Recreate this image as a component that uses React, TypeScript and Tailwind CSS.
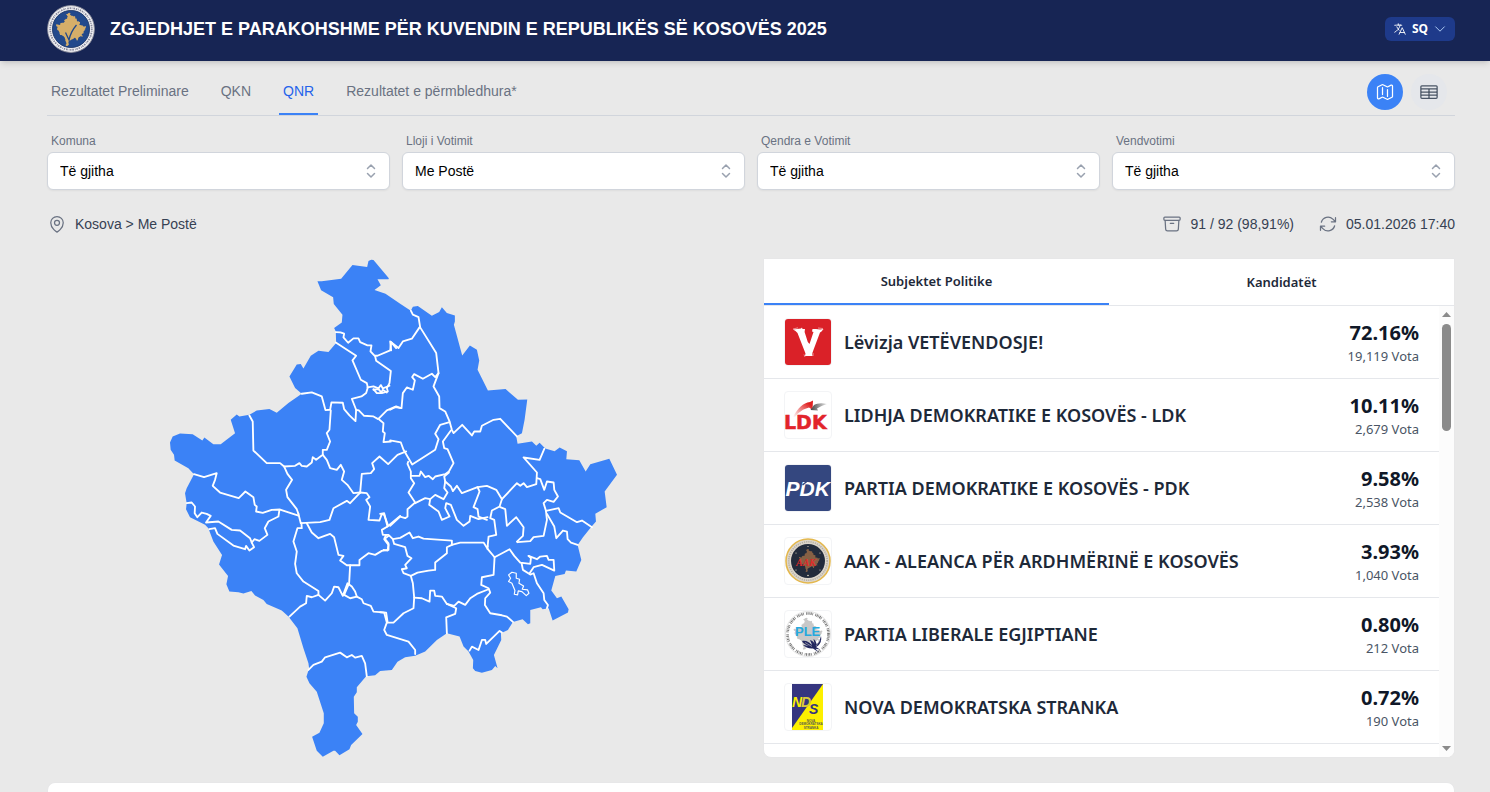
import React, { useState } from 'react';
import {
  HiOutlineArchiveBox,
  HiOutlineArrowPath,
  HiOutlineChevronDown,
  HiOutlineLanguage,
  HiOutlineMap,
  HiOutlineMapPin,
  HiOutlineTableCells,
} from 'react-icons/hi2';

const KOSOVO =
  'M472 95 L485 95 543 87 577 46 621 52 625 34 633 30 640 31 686 86 685 89 652 89 662 107 643 121 676 132 720 162 752 183 758 171 773 169 815 198 837 187 845 173 860 190 884 197 884 215 881 225 906 317 929 287 950 300 957 332 952 360 983 422 1036 418 1073 450 1101 449 1093 510 1085 550 1068 559 1072 582 1115 575 1128 588 1138 579 1155 596 1183 604 1198 593 1220 604 1218 628 1257 631 1276 665 1290 643 1347 627 1370 675 1333 725 1339 772 1305 792 1307 815 1292 832 1268 862 1252 885 1263 930 1248 965 1217 962 1213 972 1185 978 1173 1022 1190 1045 1203 1040 1225 1078 1223 1088 1177 1112 1165 1075 1147 1078 1142 1072 1110 1080 1110 1120 1103 1123 1087 1108 1058 1116 1043 1140 1022 1150 1023 1170 1001 1215 1012 1255 1005 1248 995 1260 965 1268 945 1263 938 1255 939 1230 925 1205 910 1190 898 1160 860 1150 830 1170 795 1205 765 1217 735 1222 712 1235 695 1260 660 1263 645 1276 618 1279 590 1312 590 1327 581 1340 582 1390 593 1400 593 1415 588 1425 607 1452 573 1485 568 1498 538 1516 525 1502 520 1502 488 1520 470 1502 456 1460 478 1448 491 1420 491 1390 470 1325 448 1300 439 1280 447 1255 445 1240 430 1195 412 1135 385 1100 365 1082 320 1062 310 1050 285 1037 274 1023 250 1031 235 1027 208 1025 199 1003 204 978 177 944 186 915 160 875 145 835 135 825 90 802 78 778 80 760 75 730 80 715 102 673 85 655 44 632 42 615 32 600 30 578 38 560 60 551 98 553 127 572 133 563 160 583 182 583 225 550 212 510 230 494 238 500 268 495 290 482 328 478 350 489 385 460 425 432 405 415 388 380 410 344 422 343 430 356 452 318 475 303 505 307 528 280 527 245 522 235 545 218 547 195 521 163 519 143 483 122Z';

// Municipality borders, one group of lines per region
const BORDERS = [
  {
    origin: 'translate(0 0)',
    lines: [
      'M527 247 L541 248 552 252 550 263 564 279 580 266 595 266 600 277 622 287 634 287 631 305 643 318 652 318 690 302 693 277 708 295',
      'M527 278 L588 318 577 332 602 390 620 400 623 413 618 430 604 440 575 447 588 480 586 514 568 497 552 478 548 459 514 458 510 480 496 481 485 440 455 428 425 432',
      'M645 320 L648 333 692 364 688 400 680 415 683 425 665 430 655 418 640 420',
      'M622 413 L640 410 655 416 662 406 668 416 688 408 M640 418 L650 430 662 430 668 420 680 428',
      'M588 480 L596 482 612 498 640 500 654 508 680 482 708 470 722 475',
      'M658 510 L670 520 668 545 674 550 670 577 692 575',
      'M512 482 L508 540 500 550 510 575 500 600 488 600 488 615 468 630 458 622 455 638 440 650 425 648 418 640 405 648 372 650 360 640 320 640 280 602 278 515 268 497',
      'M488 615 L500 630 510 655 530 660 542 645 552 665 545 690 562 705 580 730 600 728',
      'M600 728 L605 672 632 670 642 658 636 640 658 620 684 643 712 615 738 605',
      'M372 650 L382 672 396 690 378 720 382 742 410 778 415 792',
    ],
  },
  {
    origin: 'translate(0 570)',
    lines: [
      'M102 103 L132 112 170 100 165 120 158 138 180 158 236 175 256 155 280 172 284 195 290 200 288 215 308 219 335 210 360 209 415 227',
      'M358 210 L355 230 325 245 314 265 322 285 298 303 283 298 275 308',
      'M80 190 L95 188 105 200 104 220 112 232 125 218 140 222 152 228 138 248 175 245 215 270 240 272 270 295 275 308 282 322 268 332 258 318 255 328 220 317 172 282 165 265 148 268',
      'M415 222 L422 250 480 247 508 240 520 205 560 183 570 190 600 158',
      'M424 250 L425 265 412 265 400 305 410 335 405 372 410 400 430 425 475 453 475 465 455 472 440 468 438 490 420 500 388 530',
      'M440 250 L455 278 475 295 510 282 522 292 535 345 550 348 540 362 560 376 598 376 598 360 625 340 645 345 665 333 685 330 685 310 673 295 678 285',
      'M570 376 L567 430 552 465',
      'M475 465 L495 482 515 460 522 440 535 442 548 468 562 430 575 440 585 455 590 470 570 475 552 465',
      'M590 470 L605 478 610 490 632 498 640 515 678 518 682 545',
      'M600 158 L620 160 628 172 618 180 630 200 625 240 658 242 665 222 672 225 683 255',
    ],
  },
  {
    origin: 'translate(690 120)',
    lines: [
      'M62 63 L68 75 85 82 90 113 138 190 145 250 130 290 147 320 148 355 165 365 178 395 185 420 190 430 216 405 245 437 252 425 270 425 275 408 310 390 330 387 380 440',
      'M3 182 L0 155 25 175 38 155 65 147 88 113',
      'M145 250 L135 262 125 252 98 267 72 253 66 262 74 272 68 300 50 293 38 310 34 355 15 352 0 360',
      'M178 397 L150 405 135 432 145 448 135 480 66 524 40 480 32 458 0 452',
      'M182 422 L158 455 162 475 172 478 190 520 176 545 165 553 135 560 128 568 115 558 105 562 92 545 88 558 62 558',
      'M54 516 L52 522 62 545 62 565 72 580 55 608 75 638 52 658 52 680 45 685 30 680 0 708',
      'M75 640 L105 625 120 628 135 615 160 628 172 608 162 595 165 575 162 560 176 548',
      'M165 575 L182 590 188 604 200 588 215 610 262 592 290 588 318 600 335 628 380 580 390 588 400 580 410 592 438 583 440 548 400 503 448 510 462 477',
      'M262 592 L268 605 250 652 262 658 265 680 290 690',
      'M120 628 L117 645 145 665 155 690 178 680 165 655 168 640 182 645 200 690 220 708 238 695 240 678 265 688 292 682',
      'M335 628 L328 650 305 662 300 685 312 690 318 735 295 740 292 770',
      'M330 652 L345 658 350 708 378 682 400 712 398 738 380 755',
      'M440 565 L450 568 462 600 470 575 490 578 492 600 503 620 490 636 470 630 460 640 467 663 470 690 460 738 430 742 420 754 382 757',
      'M467 663 L505 655 510 668 560 697 575 692 605 712',
      'M470 672 L492 710 498 745 518 722 530 725 532 748 542 758 562 765',
    ],
  },
  {
    origin: 'translate(660 600)',
    lines: [
      'M60 198 L22 230 12 190 0 192',
      'M22 230 L5 240 8 255 25 255 38 268 60 264 88 248 98 265 115 260 130 266 215 272 215 283',
      'M25 258 L12 268 25 285 22 302 10 300',
      'M38 268 L42 282 75 292 82 318 94 325 75 345 80 355 65 358 70 370 92 378 112 368 145 362 165 360 165 338 200 310 200 292 215 285',
      'M215 285 L240 278 310 278 322 297 343 322 388 298 402 318 420 338 450 342 452 325 445 318',
      'M322 288 L322 297',
      'M343 322 L340 375 305 382 303 405 325 415 330 428 315 445 314 465 330 490 365 496 380 500 398 516',
      'M325 418 L290 432 270 445 255 465 235 455 222 468 200 462 185 440 165 438 162 422 150 422 148 455 125 445 102 443',
      'M92 378 L98 400 102 443 100 475 70 490 40 518 20 518',
      'M0 487 L12 488 20 518 12 540 20 555 85 575 105 600 105 612',
      'M200 462 L228 475 225 492 198 502 200 550',
      'M268 602 L275 590 295 600 305 570 315 570 318 582 358 543 365 548',
      'M424 340 L428 360 450 374 460 370 470 400 490 430 492 450 503 465 500 475',
      'M445 318 L470 328 480 320 500 318 505 330 520 330 522 362 485 345 460 352 448 370',
    ],
  },
  {
    origin: 'translate(360 930)',
    lines: ['M85 330 L100 315 125 305 135 292 180 278 200 292 215 285 225 293 245 288 255 310 260 349'],
  },
];

const sans = "font-['Liberation_Sans',Arial,sans-serif]";

const KosovoMap: React.FC = () => (
  <svg viewBox="27 25 1346 1498" className="w-full max-w-[449px]" role="img" aria-label="Kosova">
    <path d={KOSOVO} fill="#3b82f6" />
    <g fill="none" stroke="#fff" strokeWidth="5.5" strokeLinejoin="round" strokeLinecap="round">
      {BORDERS.map(({ origin, lines }) => (
        <g key={origin} transform={origin}>
          {lines.map(d => (
            <path key={d} d={d} />
          ))}
        </g>
      ))}
      <path
        strokeWidth="3.5"
        d="M1045 975 L1055 967 1068 970 1068 985 1078 988 1076 1000 1090 1008 1086 1018 1102 1020 1106 1030 1098 1037 1085 1025 1074 1023 1072 1035 1062 1033 1064 1022 1055 1000 1045 995 1051 985Z"
      />
    </g>
  </svg>
);

const Emblem: React.FC = () => (
  <svg viewBox="0 0 48 48" className="size-12" aria-hidden="true">
    <circle cx="24" cy="24" r="23.4" fill="#f1f1f4" stroke="#8d8f9c" strokeWidth="0.9" />
    <circle cx="24" cy="24" r="20.8" fill="none" stroke="#85879a" strokeWidth="1.8" strokeDasharray="1.3 0.8 0.7 1.1 1.6 0.9" />
    <circle cx="24" cy="24" r="18.6" fill="#22498c" stroke="#16305f" strokeWidth="0.8" />
    <path d={KOSOVO} fill="#d6ae69" transform="translate(8.4 7) scale(0.0224)" />
    <path d="M18.5 27.5 L22 35 C23 30 26 24 29.5 20" fill="none" stroke="#22498c" strokeWidth="1.3" />
  </svg>
);

const VVLogo: React.FC = () => (
  <svg viewBox="0 0 46 46" aria-hidden="true">
    <rect width="46" height="46" fill="#da2128" />
    <path
      d="M8 10.5 L12 10 16 9.4 17 8.5 17.5 10 20 10 19.6 13 22.8 23 24.5 25 28.5 13 27 12.5 27.5 10 31 10 35 10.4 38.5 10 36.5 12.5 35 13.5 29 29.5 27 35 27.5 37 20 37 20.5 34.5 12.5 14 10.5 12Z"
      fill="#fff"
    />
    <path d="M8 10 L13 8.8 M33 9 L38 9.5 M19 35.5 L20 38 M28 34 L28 37" stroke="#fff" strokeWidth="0.5" />
  </svg>
);

const LDKLogo: React.FC = () => (
  <svg viewBox="0 0 46 46" aria-hidden="true">
    <defs>
      <linearGradient id="ldk-red" x1="0" y1="1" x2="1" y2="0">
        <stop offset="0" stopColor="#fff" />
        <stop offset="0.8" stopColor="#e02020" />
      </linearGradient>
      <linearGradient id="ldk-gray" x1="0" y1="0" x2="1" y2="0">
        <stop offset="0" stopColor="#444" />
        <stop offset="1" stopColor="#e5e5e5" />
      </linearGradient>
    </defs>
    <path d="M8 25 C13 16 18 11 25 10 L28 8.500 27.500 18 24 15.500 C18 17 14 20 10 25Z" fill="url(#ldk-red)" />
    <path d="M42 12 C36 10.500 32 11.500 29 13 L25.500 18 33 18.500 32 16.500 C35 15 38 13 42 12Z" fill="url(#ldk-gray)" />
    <text x="-1" y="37" fontSize="19" fontWeight="700" fill="#e2242b" stroke="#e2242b" strokeWidth="0.5" fontFamily="'DejaVu Sans', sans-serif">
      LDK
    </text>
  </svg>
);

const PDKLogo: React.FC = () => (
  <svg viewBox="0 0 46 46" aria-hidden="true">
    <rect width="46" height="46" fill="#34477f" />
    <text x="0.5" y="31" fontSize="21" fontWeight="700" fontStyle="italic" fill="#fff" fontFamily="'Liberation Sans', sans-serif">
      PDK
    </text>
    <path d="M17.500 20 L23 15.500" stroke="#34477f" strokeWidth="1.600" />
  </svg>
);

const AAKLogo: React.FC = () => (
  <svg viewBox="0 0 46 46" aria-hidden="true">
    <circle cx="23" cy="23" r="22" fill="#ddd6cb" stroke="#e4b84e" strokeWidth="1.6" />
    <circle cx="23" cy="23" r="19.2" fill="none" stroke="#b5afa5" strokeWidth="1.6" strokeDasharray="1.2 1" />
    <circle cx="23" cy="23" r="17" fill="#232b3b" />
    <path d={KOSOVO} fill="#876044" transform="translate(13.500 10.400) scale(0.0155)" />
    <text x="11" y="28" fontSize="10" fontWeight="700" fontStyle="italic" fill="#e02a2a" fontFamily="'Liberation Serif', serif">
      AAK
    </text>
    <g fill="#e8e0c8">
      <circle cx="23" cy="8.5" r="0.6" />
      <circle cx="11" cy="15" r="0.6" />
      <circle cx="35" cy="15" r="0.6" />
      <circle cx="11" cy="32" r="0.6" />
      <circle cx="35" cy="32" r="0.6" />
      <circle cx="23" cy="37.5" r="0.8" />
    </g>
  </svg>
);

const PLELogo: React.FC = () => (
  <svg viewBox="0 0 46 46" aria-hidden="true">
    <circle cx="23" cy="23" r="22.500" fill="#fff" stroke="#c9c9c9" strokeWidth="0.500" />
    <circle
      cx="23"
      cy="23"
      r="20.500"
      fill="none"
      stroke="#777"
      strokeWidth="2.600"
      strokeDasharray="0.8 0.7 1.1 0.6 0.6 0.8 1.2 0.7 0.7 2.200"
    />
    <path d={KOSOVO} fill="#c8c8c8" transform="translate(8 6) scale(0.0215)" />
    <text x="10" y="24.500" fontSize="13" fontWeight="700" fill="#25a9de" fontFamily="'Liberation Sans', sans-serif">
      PLE
    </text>
    <path
      d="M17 30 C21 29 24 31 27 34 L25 29 C28 30 29 31 29.500 33 L28.500 28 C30.500 29 31 31 31.500 33 C34 32 35 28 36 25 C37 30 35 34 31 36 L35 38.500 30.500 37.800 34 41.500 28 37.500 C24 38 20 36 18 34 L24 34.800 C20 33.800 18 32 17 30Z"
      fill="#23285f"
    />
    <path d="M20 31.500 L27 35.500 M31 35 L35 29" stroke="#c8c8c8" strokeWidth="0.600" />
  </svg>
);

const NDSLogo: React.FC = () => (
  <svg viewBox="0 0 46 46" aria-hidden="true">
    <rect x="7" width="31" height="46" fill="#fdf000" />
    <path d="M7 0 H38 L7 44Z" fill="#35357f" />
    <g fontWeight="700" fontStyle="italic" fontFamily="'Liberation Sans Narrow', 'Liberation Sans', sans-serif">
      <text x="7" y="22.5" fontSize="14" fill="#fdf000">N</text>
      <text x="16" y="23" fontSize="14" fill="#d9c93a">D</text>
      <text x="24" y="30" fontSize="14" fill="#35357f">S</text>
    </g>
    <g fontSize="3" fontWeight="700" fill="#5a5a50" textAnchor="middle" fontFamily="'Liberation Sans', sans-serif">
      <text x="26" y="37.5">NOVA</text>
      <text x="26" y="41">DEMOKRATSKA</text>
      <text x="26" y="44.500">STRANKA</text>
    </g>
  </svg>
);

const tabs = ['Rezultatet Preliminare', 'QKN', 'QNR', 'Rezultatet e përmbledhura*'];

const filters = [
  { id: 'komuna', label: 'Komuna', value: 'Të gjitha' },
  { id: 'lloji', label: 'Lloji i Votimit', value: 'Me Postë' },
  { id: 'qendra', label: 'Qendra e Votimit', value: 'Të gjitha' },
  { id: 'vendvotimi', label: 'Vendvotimi', value: 'Të gjitha' },
];

const parties = [
  { name: 'Lëvizja VETËVENDOSJE!', percent: '72.16%', votes: '19,119', Logo: VVLogo },
  { name: 'LIDHJA DEMOKRATIKE E KOSOVËS - LDK', percent: '10.11%', votes: '2,679', Logo: LDKLogo },
  { name: 'PARTIA DEMOKRATIKE E KOSOVËS - PDK', percent: '9.58%', votes: '2,538', Logo: PDKLogo },
  { name: 'AAK - ALEANCA PËR ARDHMËRINË E KOSOVËS', percent: '3.93%', votes: '1,040', Logo: AAKLogo },
  { name: 'PARTIA LIBERALE EGJIPTIANE', percent: '0.80%', votes: '212', Logo: PLELogo },
  { name: 'NOVA DEMOKRATSKA STRANKA', percent: '0.72%', votes: '190', Logo: NDSLogo },
];

const Header: React.FC = () => (
  <header className="relative flex items-center justify-between bg-[#172554] pt-[5px] pr-[35px] pb-2 pl-[47px] shadow-md">
    <div className="flex items-center gap-[15px]">
      <Emblem />
      <h1 className="text-lg font-bold text-white">ZGJEDHJET E PARAKOHSHME PËR KUVENDIN E REPUBLIKËS SË KOSOVËS 2025</h1>
    </div>
    <button className="flex h-6 items-center gap-[5px] rounded-md bg-[#1e3a8a] px-2 font-['Noto_Sans',sans-serif] text-xs font-bold text-white">
      <HiOutlineLanguage className="size-3.5" />
      SQ
      <HiOutlineChevronDown className="size-3.5 text-blue-200" />
    </button>
  </header>
);

const App: React.FC = () => {
  const [tab, setTab] = useState('QNR');

  return (
    <div className={`flex min-h-screen flex-col bg-[#e9e9e9] ${sans}`}>
      <Header />
      <main className="flex flex-1 flex-col pr-[35px] pl-[47px]">
        <div className="flex items-stretch justify-between border-b border-gray-300">
          <nav className="flex gap-6">
            {tabs.map(t => (
              <button
                key={t}
                onClick={() => setTab(t)}
                className={`border-b-2 px-1 pt-2 text-sm ${
                  t === tab ? 'border-[#3b82f6] text-[#2563eb]' : 'border-transparent text-gray-500'
                }`}
              >
                {t}
              </button>
            ))}
          </nav>
          <div className="flex gap-2 pt-[13px] pr-2 pb-[5px]">
            <button aria-label="Harta" className="flex size-9 items-center justify-center rounded-full bg-[#3b82f6] text-white">
              <HiOutlineMap className="size-5" />
            </button>
            <button aria-label="Tabela" className="flex size-9 items-center justify-center rounded-full bg-gray-200 text-gray-600">
              <HiOutlineTableCells className="size-5" />
            </button>
          </div>
        </div>

        <div className="mt-[17px] grid grid-cols-4 gap-3">
          {filters.map(f => (
            <div key={f.id}>
              <label htmlFor={f.id} className="mb-[3px] block pl-1 text-xs text-gray-500">
                {f.label}
              </label>
              <div className="relative">
                <select
                  id={f.id}
                  defaultValue={f.value}
                  className="block h-[38px] w-full appearance-none rounded-md border border-gray-300 bg-white pr-10 pl-3 text-sm text-black shadow-xs"
                >
                  <option>{f.value}</option>
                </select>
                <svg
                  viewBox="0 0 20 20"
                  className="pointer-events-none absolute top-[9px] right-2 size-5 text-gray-400"
                  fill="none"
                  stroke="currentColor"
                  strokeWidth="1.5"
                  strokeLinecap="round"
                  strokeLinejoin="round"
                  aria-hidden="true"
                >
                  <path d="M5.5 7.5 L9 4 12.5 7.5 M5.5 12.5 L9 16 12.5 12.5" />
                </svg>
              </div>
            </div>
          ))}
        </div>

        <div className="mt-6 flex items-center justify-between text-sm text-gray-700">
          <div className="flex items-center gap-2">
            <HiOutlineMapPin className="size-5 text-gray-500" />
            Kosova &gt; Me Postë
          </div>
          <div className="flex items-center gap-6">
            <span className="flex items-center gap-2">
              <HiOutlineArchiveBox className="size-5 text-gray-500" />
              91 / 92 (98,91%)
            </span>
            <span className="flex items-center gap-2">
              <HiOutlineArrowPath className="size-5 text-gray-500" />
              05.01.2026 17:40
            </span>
          </div>
        </div>

        <div className="mt-6 grid grid-cols-2 gap-6">
          <div className="flex items-start justify-center">
            <KosovoMap />
          </div>

          <section className="overflow-hidden rounded-b-lg border border-[#e7e7e8] bg-white font-['Noto_Sans',sans-serif]">
            <div className="flex border-b border-gray-200 text-[13px] font-semibold text-gray-800">
              <button className="-mb-px h-[46px] flex-1 border-b-2 border-[#3b82f6] pt-0.5">Subjektet Politike</button>
              <button className="h-[46px] flex-1 pt-0.5">Kandidatët</button>
            </div>
            <div className="flex h-[451px]">
              <ul className="flex-1 overflow-hidden">
                {parties.map(({ name, percent, votes, Logo }) => (
                  <li key={name} className="flex h-[73px] items-center gap-3 border-b border-gray-200 px-5">
                    <div className="size-12 overflow-hidden rounded border border-gray-100">
                      <Logo />
                    </div>
                    <span className="flex-1 text-lg font-semibold text-gray-800">{name}</span>
                    <div className="pt-1 text-right">
                      <p className="text-xl leading-6 font-bold text-gray-900">{percent}</p>
                      <p className="text-[13px] leading-[22px] text-gray-600">{votes} Vota</p>
                    </div>
                  </li>
                ))}
              </ul>
              <div className="flex w-[15px] flex-col items-center bg-[#fcfcfc] py-1.5 text-[#8b8b8b]">
                <svg viewBox="0 0 9 5" className="h-[5px] w-[9px]" fill="currentColor" aria-hidden="true">
                  <path d="M0 5 L4.5 0 9 5Z" />
                </svg>
                <div className="mt-[7px] mb-auto h-[107px] w-[9px] rounded-full bg-[#8b8b8b]" />
                <svg viewBox="0 0 9 5" className="h-[5px] w-[9px]" fill="currentColor" aria-hidden="true">
                  <path d="M0 0 L4.5 5 9 0Z" />
                </svg>
              </div>
            </div>
          </section>
        </div>

        <div className="mt-6 flex-1 rounded-t-lg border border-b-0 border-[#e7e7e8] bg-white" />
      </main>
    </div>
  );
};

export default App;
